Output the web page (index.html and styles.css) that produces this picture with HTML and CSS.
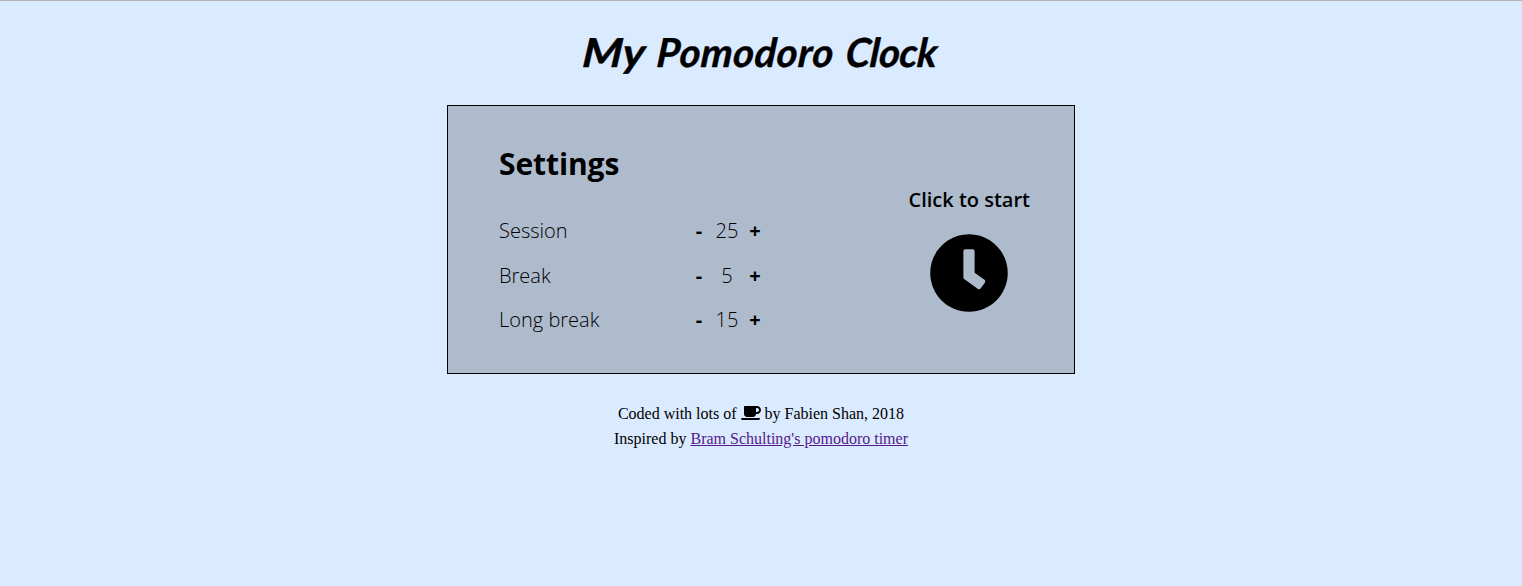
FILE: index.html
```html
<!DOCTYPE html>
<html lang="en">
<head>
<meta charset="utf-8">
<title>My Pomodoro Clock</title>
<link rel="stylesheet" href="styles.css">
</head>
<body>
<h1 class="title"><span class="word word-my">My</span> <span class="word word-pomodoro">Pomodoro</span> <span class="word word-clock">Clock</span></h1>
<main class="panel">
  <section class="settings">
    <h2 class="heading">Settings</h2>
    <div class="row"><span class="label">Session</span><b class="btn">-</b><span class="value">25</span><b class="btn">+</b></div>
    <div class="row"><span class="label">Break</span><b class="btn">-</b><span class="value">5</span><b class="btn">+</b></div>
    <div class="row"><span class="label">Long break</span><b class="btn">-</b><span class="value">15</span><b class="btn">+</b></div>
  </section>
  <section class="start">
    <div class="start-text">Click to start</div>
    <svg class="clock" viewBox="0 0 512 512"><path d="M256 8C119 8 8 119 8 256s111 248 248 248 248-111 248-248S393 8 256 8zm57.100 350.100L224.900 294c-3.100-2.300-4.900-5.900-4.900-9.700V116c0-6.600 5.400-12 12-12h48c6.600 0 12 5.400 12 12v137.700l63.500 46.200c5.400 3.900 6.500 11.400 2.600 16.800l-28.200 38.800c-3.900 5.300-11.400 6.500-16.800 2.600z"/></svg>
  </section>
</main>
<footer class="footer">
  <div>Coded with lots of <svg class="cup" viewBox="0 0 640 512"><path d="M192 384h192c53 0 96-43 96-96h32c70.600 0 128-57.400 128-128S582.600 32 512 32H120c-13.300 0-24 10.700-24 24v232c0 53 43 96 96 96zM512 96c35.300 0 64 28.700 64 64s-28.700 64-64 64h-32V96h32zm47.700 384H48.300c-47.600 0-61-64-36-64h583.300c25 0 11.800 64-35.900 64z"/></svg> by Fabien Shan, 2018</div>
  <div>Inspired by <a class="link" href="#">Bram Schulting's pomodoro timer</a></div>
</footer>
</body>
</html>
```
FILE: styles.css
```css
body { margin: 0; height: 586px; box-sizing: border-box; border-top: 1px solid #b5b0b8; background: #daeaff; color: #000; overflow: hidden; }
.title { margin: 0; height: 104px; padding-left: 6px; display: flex; justify-content: center; gap: 12px; font: italic 700 40px/102px "Lato", sans-serif; white-space: nowrap; }
.word { transform: skewX(-5deg); -webkit-text-stroke: 0.4px #000; }
.word-my { transform: skewX(-5deg) scaleX(1.15); transform-origin: right center; }
.word-pomodoro { letter-spacing: 0.5px; }
.word-clock { letter-spacing: -0.5px; }
.panel { box-sizing: border-box; width: 628px; height: 269px; margin: 0 auto; padding: 0 44px 0 51px; border: 1px solid #000; background: #aebbcc; display: flex; justify-content: space-between; font-family: "Open Sans", sans-serif; }
.settings { width: 270px; }
.heading { margin: 37px 0 24px; font-size: 30px; line-height: 42px; font-weight: 700; letter-spacing: -0.1px; }
.row { display: grid; grid-template-columns: 190px 20px 36px 20px; height: 44.500px; line-height: 44.500px; font-size: 20px; font-weight: 300; text-align: center; }
.label { text-align: left; }
.btn { font-weight: 700; }
.start { padding-top: 80px; text-align: center; font-size: 20px; line-height: 28px; font-weight: 600; }
.clock { display: block; width: 80px; height: 80px; margin: 19px auto 0; }
.footer { margin-top: 27px; text-align: center; font: 16px/25px "Liberation Serif", serif; }
.cup { width: 20px; height: 16px; vertical-align: -2px; }
.link { color: #551a8b; }
```
